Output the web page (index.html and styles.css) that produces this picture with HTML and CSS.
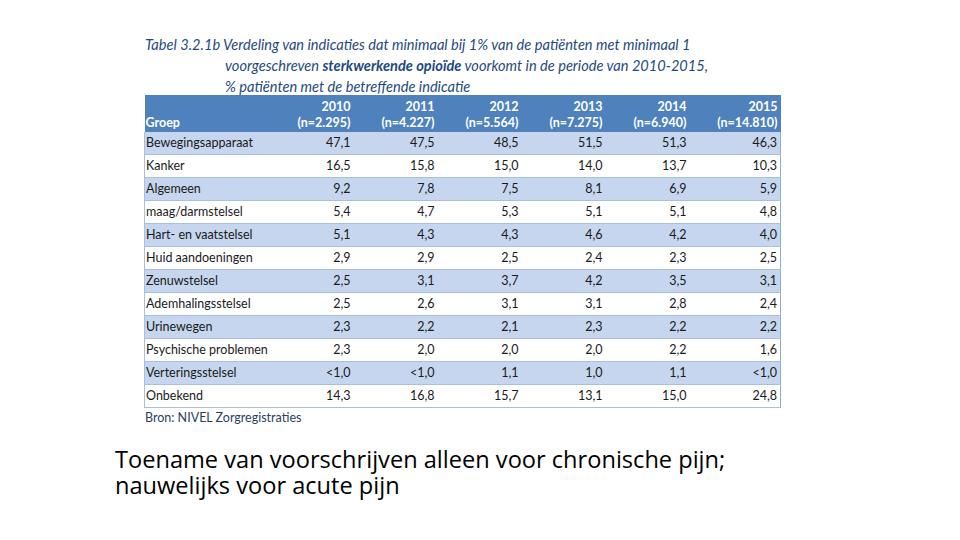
FILE: index.html
```html
<!DOCTYPE html>
<html lang="nl">
<head>
<meta charset="utf-8">
<title>Tabel 3.2.1b</title>
<link rel="stylesheet" href="styles.css">
</head>
<body>
<div class="slide">
  <div class="figure">
    <div class="caption">
      <div class="cap-line"><span class="cap-label">Tabel 3.2.1b</span> Verdeling van indicaties dat minimaal bij 1% van de patiënten met minimaal 1</div>
      <div class="cap-line indent">voorgeschreven <b>sterkwerkende opioïde</b> voorkomt in de periode van 2010-2015,</div>
      <div class="cap-line indent">% patiënten met de betreffende indicatie</div>
    </div>
    <table class="data">
      <thead>
        <tr>
          <th class="grp">Groep</th>
          <th>2010<br>(n=2.295)</th>
          <th>2011<br>(n=4.227)</th>
          <th>2012<br>(n=5.564)</th>
          <th>2013<br>(n=7.275)</th>
          <th>2014<br>(n=6.940)</th>
          <th class="last">2015<br>(n=14.810)</th>
        </tr>
      </thead>
      <tbody>
        <tr class="alt"><td>Bewegingsapparaat</td><td>47,1</td><td>47,5</td><td>48,5</td><td>51,5</td><td>51,3</td><td class="last">46,3</td></tr>
        <tr><td>Kanker</td><td>16,5</td><td>15,8</td><td>15,0</td><td>14,0</td><td>13,7</td><td class="last">10,3</td></tr>
        <tr class="alt"><td>Algemeen</td><td>9,2</td><td>7,8</td><td>7,5</td><td>8,1</td><td>6,9</td><td class="last">5,9</td></tr>
        <tr><td>maag/darmstelsel</td><td>5,4</td><td>4,7</td><td>5,3</td><td>5,1</td><td>5,1</td><td class="last">4,8</td></tr>
        <tr class="alt"><td>Hart- en vaatstelsel</td><td>5,1</td><td>4,3</td><td>4,3</td><td>4,6</td><td>4,2</td><td class="last">4,0</td></tr>
        <tr><td>Huid aandoeningen</td><td>2,9</td><td>2,9</td><td>2,5</td><td>2,4</td><td>2,3</td><td class="last">2,5</td></tr>
        <tr class="alt"><td>Zenuwstelsel</td><td>2,5</td><td>3,1</td><td>3,7</td><td>4,2</td><td>3,5</td><td class="last">3,1</td></tr>
        <tr><td>Ademhalingsstelsel</td><td>2,5</td><td>2,6</td><td>3,1</td><td>3,1</td><td>2,8</td><td class="last">2,4</td></tr>
        <tr class="alt"><td>Urinewegen</td><td>2,3</td><td>2,2</td><td>2,1</td><td>2,3</td><td>2,2</td><td class="last">2,2</td></tr>
        <tr><td>Psychische problemen</td><td>2,3</td><td>2,0</td><td>2,0</td><td>2,0</td><td>2,2</td><td class="last">1,6</td></tr>
        <tr class="alt"><td>Verteringsstelsel</td><td>&lt;1,0</td><td>&lt;1,0</td><td>1,1</td><td>1,0</td><td>1,1</td><td class="last">&lt;1,0</td></tr>
        <tr><td>Onbekend</td><td>14,3</td><td>16,8</td><td>15,7</td><td>13,1</td><td>15,0</td><td class="last">24,8</td></tr>
      </tbody>
    </table>
    <div class="source">Bron: NIVEL Zorgregistraties</div>
  </div>
  <div class="note">
    <div class="note-line">Toename van voorschrijven alleen voor chronische pijn;</div>
    <div class="note-line">nauwelijks voor acute pijn</div>
  </div>
</div>
</body>
</html>
```

FILE: styles.css
```css
html, body {
  margin: 0;
  padding: 0;
  background: #ffffff;
}

.slide {
  width: 960px;
  height: 540px;
  display: flex;
  flex-direction: column;
  overflow: hidden;
}

.figure {
  padding: 34px 0 0 144px;
  font-family: Lato, "Noto Sans", sans-serif;
}

.caption {
  color: #1f4a7e;
  font-style: italic;
  font-size: 14.6px;
  line-height: 21px;
  margin-bottom: -2px;
}

.cap-line {
  white-space: nowrap;
  padding-left: 1px;
}

.cap-line.indent {
  padding-left: 81px;
}

.cap-line b {
  font-weight: 700;
}

.data {
  border-collapse: collapse;
  width: 637px;
  table-layout: fixed;
  font-size: 12.5px;
  color: #1a1a1a;
}

.data th,
.data td {
  padding: 0 3px 0 1px;
  text-align: right;
  white-space: nowrap;
}

.data th:first-child,
.data td:first-child {
  text-align: left;
  width: 121px;
}

.data th {
  background: #4f81bd;
  color: #ffffff;
  font-weight: 700;
  height: 36px;
  line-height: 16px;
  vertical-align: bottom;
  padding-bottom: 1px;
  width: 80px;
}

.data th.last {
  width: 87px;
}

.data td {
  height: 22px;
  line-height: 22px;
  border-bottom: 1px solid #a9bfdd;
}

.data tbody tr {
  border-left: 1px solid #a9bfdd;
  border-right: 1px solid #8eaad6;
}

.data tr.alt td {
  background: #c6d6ee;
}

.source {
  color: #2a3f5c;
  font-size: 12.5px;
  line-height: 20px;
  padding-left: 1px;
  margin-top: 0;
}

.note {
  margin: 18px 0 0 115px;
  font-family: "Open Sans", sans-serif;
  font-size: 23.6px;
  line-height: 26px;
  color: #000000;
}

.note-line {
  white-space: nowrap;
}
```
